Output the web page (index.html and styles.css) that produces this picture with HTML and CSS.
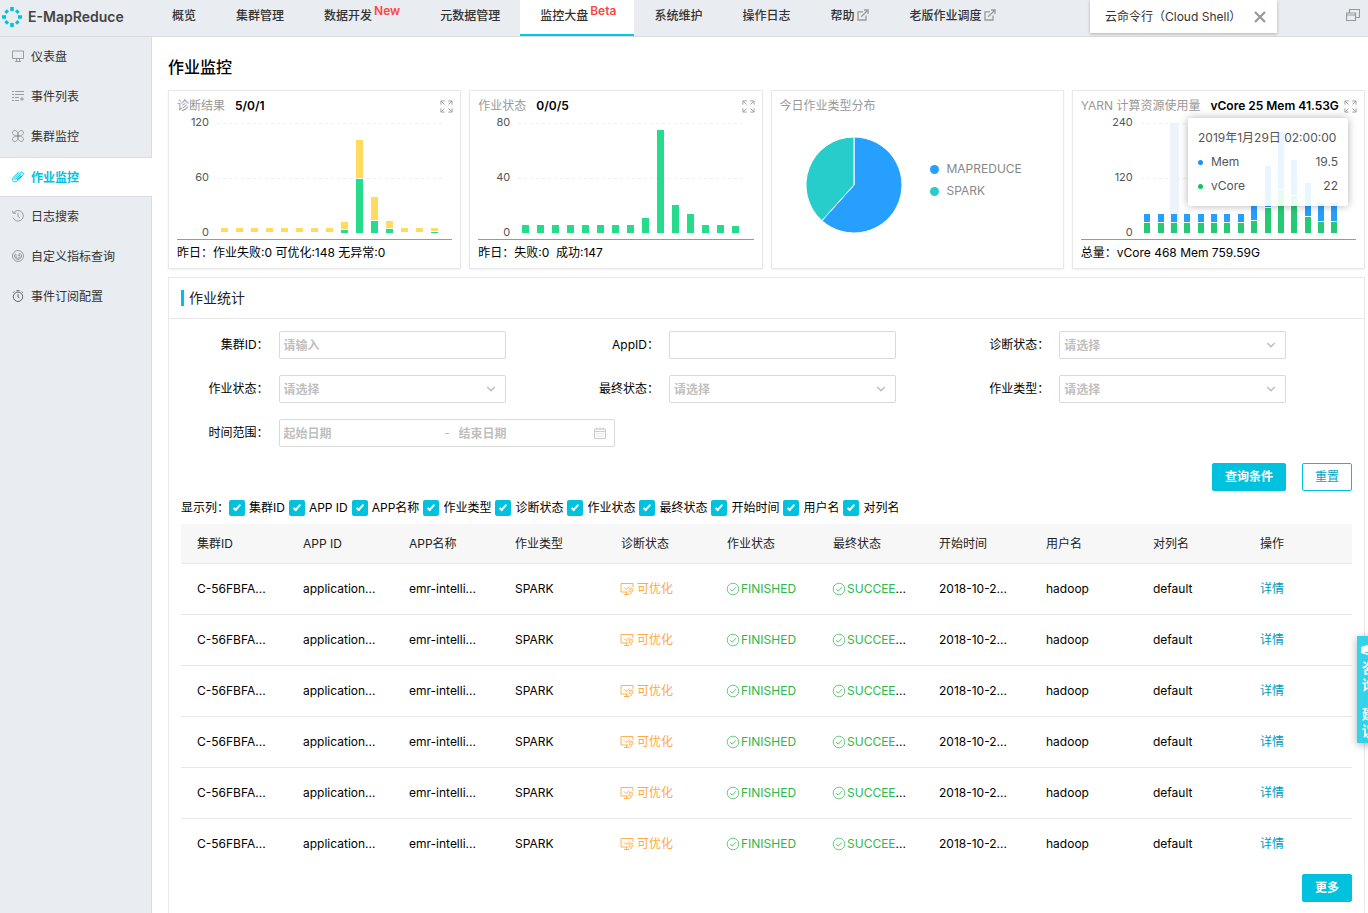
FILE: index.html
```html
<!DOCTYPE html>
<html lang="zh-CN">

<head>
    <meta charset="UTF-8">
    <meta name="viewport" content="width=device-width, initial-scale=1.0">
    <title>E-MapReduce 作业监控</title>
    <link rel="stylesheet" href="styles.css">
</head>

<body>
    <!-- shared icons -->
    <svg class="sprite" aria-hidden="true">
        <symbol id="icon-external" viewBox="0 0 12 12">
            <path d="M6 2.8H1v8.2h8V6.5M4.2 7.8L10 2M7 1h4v4" fill="none" stroke="currentColor" stroke-width="1.3" />
        </symbol>
        <symbol id="icon-expand" viewBox="0 0 14 14">
            <path d="M1 5V1h4M1.2 1.2l3.6 3.6M9 1h4v4M12.8 1.2L9.2 4.8M1 9v4h4M1.2 12.8l3.6-3.6M9 13h4V9M12.8 12.8L9.2 9.2" fill="none" stroke="currentColor" />
        </symbol>
        <symbol id="icon-chevron" viewBox="0 0 10 10">
            <path d="M1.2 3L5 6.600l3.800-3.600" fill="none" stroke="currentColor" stroke-width="1.5" />
        </symbol>
        <symbol id="icon-calendar" viewBox="0 0 12 12">
            <path d="M.5 2h11v9.500H.5zM.5 4.500h11M3 .5v2.500M6 .5v2.500M9 .5v2.500" fill="none" stroke="currentColor" stroke-width=".8" />
            <path d="M2.500 6.500h7M2.500 9h7" fill="none" stroke="currentColor" stroke-dasharray="1 1" stroke-width=".8" />
        </symbol>
        <symbol id="icon-ok" viewBox="0 0 14 14">
            <circle cx="7" cy="7" r="5.800" fill="none" stroke="currentColor" stroke-width=".7" />
            <path d="M4.200 7.200l2 2 3.800-4" fill="none" stroke="currentColor" stroke-width=".8" />
        </symbol>
        <symbol id="icon-optimize" viewBox="0 0 14 14">
            <path d="M13 5V1.500h-12v8.500h7.500M6.500 10v2.500M4 12.500h5.500M4 5.500l2 2 3.500-3" fill="none" stroke="currentColor" stroke-width=".9" />
            <circle cx="11" cy="8" r="2" fill="none" stroke="currentColor" stroke-width=".8" />
            <path d="M11 6.500v2M9.500 11.200h2.500" fill="none" stroke="currentColor" stroke-width=".8" />
        </symbol>
    </svg>

    <header class="topbar">
        <a href="#" class="brand">
            <svg width="20" height="20" viewBox="0 0 20 20">
                <g stroke="#00c1de" stroke-width="3.600">
                    <path d="M10 0v4M10 16v4M0 10h4M16 10h4" />
                    <path d="M3.600 3.600l2.200 2.200M14.200 14.200l2.200 2.200M3.600 16.400l2.200-2.200M14.200 5.800l2.200-2.200" />
                </g>
            </svg>
            E-MapReduce
        </a>
        <nav class="topnav">
            <a href="#">概览</a>
            <a href="#">集群管理</a>
            <a href="#">数据开发<sup>New</sup></a>
            <a href="#">元数据管理</a>
            <a href="#" class="active">监控大盘<sup>Beta</sup></a>
            <a href="#">系统维护</a>
            <a href="#">操作日志</a>
            <a href="#">帮助<svg class="ext"><use href="#icon-external" /></svg></a>
            <a href="#">老版作业调度<svg class="ext"><use href="#icon-external" /></svg></a>
        </nav>
        <div class="shell">
            <span>云命令行（Cloud Shell）</span>
            <button type="button" aria-label="关闭">
                <svg width="12" height="12" viewBox="0 0 12 12"><path d="M1 1l10 10M11 1L1 11" stroke="#999" stroke-width="2.200" /></svg>
            </button>
        </div>
        <button type="button" class="windows" aria-label="窗口">
            <svg width="14" height="12" viewBox="0 0 14 12"><path d="M3.500 3.500v-3h10v8H10M.5 4h9v7.500h-9zM.5 6h9" fill="none" stroke="#999" stroke-width="1.200" /></svg>
        </button>
    </header>

    <div class="layout">
        <aside class="sidebar">
            <a href="#">
                <svg viewBox="0 0 12 12"><path d="M.5 1h11v7.500H.5zM3 11.500h6M4.500 8.500v3M7.500 8.500v3" /></svg>
                仪表盘
            </a>
            <a href="#">
                <svg viewBox="0 0 12 12"><path d="M0 1.500h2M3 1.500h9M0 4.500h2M3 4.500h9M0 7.500h2M3 7.500h4M0 10.500h2M3 10.500h4M8 9h4M10 7v4" /></svg>
                事件列表
            </a>
            <a href="#">
                <svg viewBox="0 0 12 12"><path d="M6 6C6 2 4.500.5 2.800.5S.5 1.800.5 3 2 6 6 6zM6 6c0-4 1.500-5.500 3.200-5.500S11.500 1.800 11.500 3 10 6 6 6zM6 6c0 4-1.500 5.500-3.200 5.500S.5 10.200.5 9 2 6 6 6zM6 6c0 4 1.500 5.500 3.200 5.500s2.300-1.300 2.300-2.500S10 6 6 6z" /></svg>
                集群监控
            </a>
            <a href="#" class="active">
                <svg viewBox="0 0 12 12"><path d="M8.800 3.200L4 8C3.200 8.800 2 7.800 2.900 6.800l5-5c1.900-1.900 4.600.4 2.700 2.500L5.500 9.800C3 12.500-1 9.500 1.200 6.500L6.500 1.200M9 5L5 9" /></svg>
                作业监控
            </a>
            <a href="#">
                <svg viewBox="0 0 12 12"><path d="M1.500 3A5.300 5.300 0 1 1 1 7.500M.5.800l.7 2.600 2.800-.4M6 3v3.200l2 2" /></svg>
                日志搜索
            </a>
            <a href="#">
                <svg viewBox="0 0 12 12"><circle cx="6" cy="6" r="5.500" /><path d="M8.500 3.500A3.500 3.500 0 1 1 3.500 3.500M5 4.500A2 2 0 1 0 7.500 5M6 6l2-3" /></svg>
                自定义指标查询
            </a>
            <a href="#">
                <svg viewBox="0 0 12 12" class="dark"><circle cx="6" cy="6.800" r="4.700" /><path d="M4.500.7h3M6 4v3l1.500 1M1 2.800l1.300-1.300M11 2.800L9.700 1.500" /></svg>
                事件订阅配置
            </a>
        </aside>

        <main class="content">
            <h1>作业监控</h1>

            <section class="cards">
                <article class="card">
                    <div class="card-head">
                        <h2>诊断结果</h2><strong>5/0/1</strong>
                        <button type="button" aria-label="放大"><svg><use href="#icon-expand" /></svg></button>
                    </div>
                    <div class="chart">
                        <div class="axis"><span>120</span><span>60</span><span>0</span></div>
                        <div class="plot" id="chart-diagnosis"></div>
                    </div>
                    <p class="card-foot">昨日：作业失败:0 可优化:148 无异常:0</p>
                </article>

                <article class="card">
                    <div class="card-head">
                        <h2>作业状态</h2><strong>0/0/5</strong>
                        <button type="button" aria-label="放大"><svg><use href="#icon-expand" /></svg></button>
                    </div>
                    <div class="chart">
                        <div class="axis"><span>80</span><span>40</span><span>0</span></div>
                        <div class="plot" id="chart-status"></div>
                    </div>
                    <p class="card-foot">昨日：失败:0&nbsp; 成功:147</p>
                </article>

                <article class="card">
                    <div class="card-head">
                        <h2>今日作业类型分布</h2>
                    </div>
                    <div class="pie">
                        <svg width="96" height="96" viewBox="0 0 96 96">
                            <path d="M48 48V0A48 48 0 1 1 15.900 83.700z" fill="#279fff" stroke="#fff" />
                            <path d="M48 48L15.900 83.700A48 48 0 0 1 48 0z" fill="#26cdca" stroke="#fff" />
                        </svg>
                        <ul>
                            <li class="blue-dot">MAPREDUCE</li>
                            <li class="teal-dot">SPARK</li>
                        </ul>
                    </div>
                </article>

                <article class="card">
                    <div class="card-head">
                        <h2>YARN 计算资源使用量</h2><strong>vCore 25 Mem 41.53G</strong>
                        <button type="button" aria-label="放大"><svg><use href="#icon-expand" /></svg></button>
                    </div>
                    <div class="chart wide-axis">
                        <div class="axis"><span>240</span><span>120</span><span>0</span></div>
                        <div class="plot" id="chart-yarn"></div>
                    </div>
                    <p class="card-foot">总量：vCore 468 Mem 759.59G</p>
                    <div class="tooltip">
                        <p>2019年1月29日 02:00:00</p>
                        <p class="mem">Mem<span>19.5</span></p>
                        <p class="vcore">vCore<span>22</span></p>
                    </div>
                </article>
            </section>

            <section class="panel">
                <h2 class="panel-title">作业统计</h2>
                <div class="panel-body">
                    <form class="filters">
                        <div class="field">
                            <label for="cluster-id">集群ID：</label>
                            <input type="text" id="cluster-id" placeholder="请输入">
                        </div>
                        <div class="field">
                            <label for="app-id">AppID：</label>
                            <input type="text" id="app-id">
                        </div>
                        <div class="field">
                            <label for="diagnosis">诊断状态：</label>
                            <div class="select"><select id="diagnosis"><option>请选择</option></select><svg><use href="#icon-chevron" /></svg></div>
                        </div>
                        <div class="field">
                            <label for="job-status">作业状态：</label>
                            <div class="select"><select id="job-status"><option>请选择</option></select><svg><use href="#icon-chevron" /></svg></div>
                        </div>
                        <div class="field">
                            <label for="final-status">最终状态：</label>
                            <div class="select"><select id="final-status"><option>请选择</option></select><svg><use href="#icon-chevron" /></svg></div>
                        </div>
                        <div class="field">
                            <label for="job-type">作业类型：</label>
                            <div class="select"><select id="job-type"><option>请选择</option></select><svg><use href="#icon-chevron" /></svg></div>
                        </div>
                        <div class="field">
                            <label for="start-date">时间范围：</label>
                            <div class="range">
                                <input type="text" id="start-date" placeholder="起始日期">
                                <span>-</span>
                                <input type="text" id="end-date" placeholder="结束日期" aria-label="结束日期">
                                <svg><use href="#icon-calendar" /></svg>
                            </div>
                        </div>
                    </form>
                    <div class="actions">
                        <button type="button" class="btn primary">查询条件</button>
                        <button type="button" class="btn">重置</button>
                    </div>

                    <div class="columns" id="columns">
                        <span>显示列：</span>
                    </div>

                    <table>
                        <colgroup>
                            <col span="7" class="col-narrow">
                            <col span="3" class="col-wide">
                            <col>
                        </colgroup>
                        <thead>
                            <tr>
                                <th>集群ID</th>
                                <th>APP ID</th>
                                <th>APP名称</th>
                                <th>作业类型</th>
                                <th>诊断状态</th>
                                <th>作业状态</th>
                                <th>最终状态</th>
                                <th>开始时间</th>
                                <th>用户名</th>
                                <th>对列名</th>
                                <th>操作</th>
                            </tr>
                        </thead>
                        <tbody id="jobs"></tbody>
                    </table>

                    <div class="more">
                        <button type="button" class="btn primary">更多</button>
                    </div>
                </div>
            </section>
        </main>
    </div>

    <a href="#" class="feedback">
        <svg width="18" height="14" viewBox="0 0 18 14"><path d="M1 4l8-2.500L17 4v6l-8 2.500L1 10z" fill="#fff" /><path d="M5 9.500h8" stroke="#33d3e9" /></svg>
        <span>咨</span><span>询</span><span class="dot">·</span><span>建</span><span>议</span>
    </a>

    <script src="script.js"></script>
</body>

</html>
```

FILE: script.js
```js
// Bar heights, bottom series first
const charts = {
    "chart-diagnosis": {
        colors: ["green", "yellow"],
        bars: [[0, 4], [0, 4], [0, 4], [0, 4], [0, 4], [0, 4], [0, 4], [0, 4], [3, 7], [54, 38], [12, 23], [4, 7], [0, 4], [0, 4], [1, 3]]
    },
    "chart-status": {
        colors: ["green"],
        bars: [[8], [8], [8], [8], [8], [8], [8], [8], [15], [103], [28], [19], [8], [8], [7]]
    },
    "chart-yarn": {
        colors: ["dark-green", "blue"],
        hover: 2,
        bars: [[10, 8], [10, 8], [10, 8], [10, 8], [10, 8], [10, 8], [10, 8], [10, 8], [12, 14], [25, 41], [43, 57], [37, 35], [16, 33], [11, 18], [11, 18]]
    }
};

function drawChart(id) {
    const chart = charts[id];
    document.getElementById(id).innerHTML = chart.bars.map((bar, i) => {
        const parts = bar.map((h, s) => `<i class="${chart.colors[s]}" style="height:${h}px"></i>`);
        return `<div class="bar${chart.hover === i ? " hover" : ""}">${parts.join("")}</div>`;
    }).join("");
}

Object.keys(charts).forEach(drawChart);

// Column switches
const columns = ["集群ID", "APP ID", "APP名称", "作业类型", "诊断状态", "作业状态", "最终状态", "开始时间", "用户名", "对列名"];
columns.forEach(name => {
    const label = document.createElement("label");
    label.innerHTML = `<input type="checkbox" checked><span>${name}</span>`;
    document.getElementById("columns").appendChild(label);
});

// Job rows
const row = `<tr>
    <td>C-56FBFA...</td>
    <td>application...</td>
    <td>emr-intelli...</td>
    <td>SPARK</td>
    <td><span class="state warn"><svg><use href="#icon-optimize" /></svg>可优化</span></td>
    <td><span class="state ok"><svg><use href="#icon-ok" /></svg>FINISHED</span></td>
    <td><span class="state ok"><svg><use href="#icon-ok" /></svg>SUCCEE</span>...</td>
    <td>2018-10-2...</td>
    <td>hadoop</td>
    <td>default</td>
    <td><a href="#">详情</a></td>
</tr>`;
document.getElementById("jobs").innerHTML = row.repeat(6);
```

FILE: styles.css
```css
* {
    box-sizing: border-box;
}

body {
    margin: 0;
    min-height: 100vh;
    display: flex;
    flex-direction: column;
    font-family: Inter, "Noto Sans CJK SC", sans-serif;
    font-size: 12px;
    line-height: 20px;
    color: #000;
    background-color: #fff;
}

a {
    text-decoration: none;
    color: inherit;
}

h1,
h2,
p,
ul {
    margin: 0;
    padding: 0;
}

button,
input,
select {
    font: inherit;
}

button {
    padding: 0;
    border: none;
    background: none;
    cursor: pointer;
}

.sprite {
    position: absolute;
    width: 0;
    height: 0;
}

/* top bar */
.topbar {
    display: flex;
    height: 37px;
    background-color: #e9ecf1;
    border-bottom: 1px solid #dcdcdc;
    color: #333;
}

.brand {
    display: flex;
    align-items: center;
    gap: 6px;
    width: 152px;
    padding: 0 0 2px 2px;
    font-size: 14px;
    font-weight: 600;
    color: #444;
}

.topnav {
    display: flex;
}

.topnav a {
    padding: 6px 20px 0;
    font-weight: 500;
    white-space: nowrap;
}

.topnav a.active {
    padding-right: 18px;
    background-color: #fff;
    border-bottom: 2px solid #00c8e6;
}

.topnav sup {
    margin-left: 2px;
    font-size: 12px;
    font-weight: 600;
    line-height: 0;
    vertical-align: 5px;
    color: #ff4444;
}

.ext {
    width: 12px;
    height: 12px;
    margin-left: 3px;
    vertical-align: -1px;
    color: #999;
}

.shell {
    display: flex;
    align-items: center;
    justify-content: space-between;
    width: 187px;
    height: 33px;
    margin-left: auto;
    padding: 0 11px 0 15px;
    background-color: #fff;
    box-shadow: 0 1px 3px rgba(0, 0, 0, 0.25);
    white-space: nowrap;
}

.shell button,
.windows {
    display: flex;
    align-items: center;
}

.windows {
    height: 30px;
    margin: 0 8px 0 69px;
}

/* sidebar */
.layout {
    flex: 1;
    display: flex;
}

.sidebar {
    flex: none;
    width: 152px;
    background-color: #e9ecf1;
    border-right: 1px solid #dcdcdc;
}

.sidebar a {
    display: flex;
    align-items: center;
    gap: 7px;
    height: 40px;
    padding-left: 12px;
    color: #333;
}

.sidebar svg {
    width: 12px;
    height: 12px;
    margin-bottom: 2px;
    fill: none;
    stroke: #888;
    stroke-width: 0.8;
}

.sidebar svg.dark {
    stroke: #444;
}

.sidebar a.active {
    margin-right: -1px;
    padding-top: 2px;
    background-color: #fff;
    border: solid #dcdcdc;
    border-width: 1px 0;
    font-weight: 600;
    color: #00c1de;
}

.sidebar a.active svg {
    stroke: #00c1de;
    stroke-width: 1;
}

.content {
    flex: 1;
    min-width: 0;
    display: flex;
    flex-direction: column;
    padding: 18px 3px 0 16px;
}

h1 {
    margin-bottom: 11px;
    font-size: 16px;
    font-weight: 500;
    line-height: 24px;
}

/* chart cards */
.cards {
    display: grid;
    grid-template-columns: repeat(4, minmax(0, 1fr));
    gap: 8px;
    margin-bottom: 8px;
}

.card {
    position: relative;
    padding: 4px 8px 0;
    border: 1px solid #e8e8e8;
    box-shadow: 0 1px 2px rgba(0, 0, 0, 0.06);
}

.card-head {
    display: flex;
    align-items: center;
    height: 22px;
    white-space: nowrap;
}

.card-head h2 {
    margin-right: 10px;
    font-size: 12px;
    font-weight: 400;
    color: #999;
}

.card-head strong {
    font-weight: 600;
}

.card-head button {
    display: flex;
    margin-left: auto;
    margin-right: -1px;
    color: #999;
}

.card-head svg {
    width: 13px;
    height: 13px;
}

.chart {
    display: flex;
    height: 110px;
    margin: 6px 10px 6px 0;
}

.axis {
    display: flex;
    flex-direction: column;
    justify-content: space-between;
    width: 32px;
    margin: -11px 8px -9px 0;
    font-size: 11px;
    text-align: right;
    color: #555;
}

.wide-axis {
    margin-right: 15px;
}

.wide-axis .axis {
    width: 52px;
}

.plot {
    flex: 1;
    display: flex;
    background-image: repeating-linear-gradient(90deg, #f0f0f0 0 3px, #fff 3px 6px), repeating-linear-gradient(90deg, #f0f0f0 0 3px, #fff 3px 6px);
    background-size: 100% 1px;
    background-position: 0 0, 0 55px;
    background-repeat: no-repeat;
}

.bar {
    flex: 1;
    display: flex;
    flex-direction: column-reverse;
    align-items: center;
    gap: 1px;
}

.bar i {
    width: 7px;
}

.wide-axis .bar i {
    width: 6px;
}

.bar.hover {
    background: linear-gradient(#eef2fb, #eef2fb) center / 9px 100% no-repeat;
}

.green {
    background-color: #27db8d;
}

.dark-green {
    background-color: #26ca75;
}

.yellow {
    background-color: #ffdc5e;
}

.blue {
    background-color: #279fff;
}

.card-foot {
    padding-bottom: 2px;
    border-top: 1px solid #999;
    line-height: 26px;
    white-space: nowrap;
}

.pie {
    display: flex;
    align-items: center;
    gap: 28px;
    margin: 20px 0 0 26px;
}

.pie ul {
    margin-top: -10px;
    list-style: none;
}

.pie li {
    display: flex;
    align-items: center;
    gap: 8px;
    line-height: 22px;
    color: #888;
}

.pie li::before {
    content: "";
    width: 9px;
    height: 9px;
    border-radius: 50%;
}

.blue-dot::before {
    background-color: #279fff;
}

.teal-dot::before {
    background-color: #26cdca;
}

.tooltip {
    position: absolute;
    top: 27px;
    right: 16px;
    width: 160px;
    padding: 8px 10px;
    background-color: rgba(255, 255, 255, 0.9);
    border-radius: 3px;
    box-shadow: 0 0 8px rgba(0, 0, 0, 0.3);
    line-height: 24px;
    white-space: nowrap;
    color: #555;
}

.tooltip span {
    margin-left: auto;
}

.mem,
.vcore {
    display: flex;
    align-items: center;
}

.mem::before,
.vcore::before {
    content: "";
    width: 5px;
    height: 5px;
    margin-right: 8px;
    border-radius: 50%;
    background-color: #1890ff;
}

.vcore::before {
    background-color: #13c264;
}

/* job statistics */
.panel {
    flex: 1;
    border: 1px solid #e8e8e8;
    border-bottom: none;
}

.panel-title {
    display: flex;
    align-items: center;
    gap: 5px;
    height: 41px;
    padding-left: 12px;
    border-bottom: 1px solid #e8e8e8;
    font-size: 14px;
    font-weight: 400;
    color: #222;
}

.panel-title::before {
    content: "";
    width: 3px;
    height: 16px;
    background-color: #00c1de;
}

.panel-body {
    padding: 12px;
}

.filters {
    display: grid;
    grid-template-columns: repeat(3, minmax(0, 1fr));
    row-gap: 16px;
}

.field {
    display: flex;
    height: 28px;
}

.field label {
    flex: none;
    width: 25%;
    padding-right: 10px;
    line-height: 28px;
    text-align: right;
}

.field > input,
.select,
.range {
    flex: none;
    width: 227px;
    border: 1px solid #d9d9d9;
    border-radius: 2px;
}

.field > input {
    padding: 1px 4px 0;
}

.field ::placeholder {
    color: #bfbfbf;
    opacity: 1;
    font-weight: 600;
}

.select {
    position: relative;
}

.select select {
    appearance: none;
    width: 100%;
    height: 100%;
    padding: 1px 4px 0;
    border: none;
    background: none;
    font-weight: 600;
    color: #bfbfbf;
}

.select svg {
    position: absolute;
    top: 8px;
    right: 9px;
    width: 10px;
    height: 10px;
    color: #bfbfbf;
    pointer-events: none;
}

.range {
    display: flex;
    align-items: center;
    width: 336px;
    padding-right: 8px;
    color: #bfbfbf;
}

.range input {
    width: 160px;
    padding: 1px 4px 0;
    border: none;
    background: none;
}

.range input:last-of-type {
    width: 134px;
}

.range span {
    width: 15px;
    text-align: center;
}

.range svg {
    width: 12px;
    height: 12px;
    margin-left: auto;
}

.actions,
.more {
    display: flex;
    justify-content: flex-end;
    gap: 16px;
    margin-top: 16px;
}

.btn {
    height: 28px;
    padding: 0 12px;
    border: 1px solid #00c1de;
    border-radius: 2px;
    background-color: #fff;
    color: #00a5c8;
}

.btn.primary {
    background-color: #00c1de;
    font-weight: 600;
    color: #fff;
}

.columns {
    display: flex;
    gap: 4px;
    margin: 7px 0 6px;
    white-space: nowrap;
}

.columns > span {
    width: 44px;
}

.columns label {
    display: flex;
    align-items: center;
    gap: 4px;
}

.columns input {
    display: flex;
    align-items: center;
    justify-content: center;
    appearance: none;
    width: 16px;
    height: 16px;
    margin: 0;
    padding-bottom: 2px;
    border-radius: 2px;
    background-color: #00c1de;
}

.columns input:checked::before {
    content: "";
    width: 2px;
    height: 6px;
    border: solid #fff;
    border-width: 0 2px 2px 0;
    transform: rotate(42deg);
}

table {
    width: 100%;
    table-layout: fixed;
    border-collapse: separate;
    border-spacing: 0;
}

.col-narrow {
    width: 106px;
}

.col-wide {
    width: 107px;
}

th,
td {
    padding: 0 0 0 16px;
    border-bottom: 1px solid #e8e8e8;
    text-align: left;
    font-weight: 400;
    white-space: nowrap;
}

th {
    height: 40px;
    background-color: #f7f7f7;
    color: #222;
}

td {
    height: 51px;
}

tbody tr:last-child td {
    height: 50px;
    border-bottom: none;
}

td a {
    color: #0099bb;
}

.state svg {
    width: 14px;
    height: 14px;
    margin: 0 1px 0 -1px;
    vertical-align: -3px;
}

.warn svg {
    margin-right: 3px;
}

.ok {
    color: #2db84d;
}

.warn {
    color: #ffa940;
}

.more {
    margin-top: 5px;
}

/* feedback tab, partly outside the window */
.feedback {
    position: fixed;
    top: 636px;
    right: -13px;
    display: flex;
    flex-direction: column;
    align-items: center;
    width: 24px;
    padding: 7px 0 4px;
    background-color: rgba(0, 200, 228, 0.8);
    box-shadow: 0 2px 8px rgba(0, 0, 0, 0.3);
    font-size: 14px;
    font-weight: 600;
    line-height: 17px;
    color: #fff;
}

.feedback svg {
    margin-bottom: 2px;
}

.feedback .dot {
    line-height: 12px;
}
```
